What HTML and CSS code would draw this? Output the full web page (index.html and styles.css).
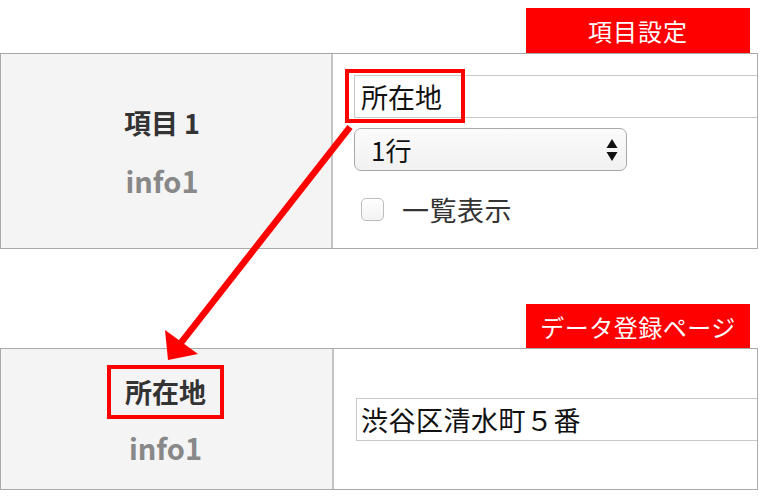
FILE: index.html
```html
<!DOCTYPE html>
<html lang="ja">
<head>
  <meta charset="UTF-8">
  <meta name="viewport" content="width=device-width, initial-scale=1.0">
  <title>項目設定とデータ登録</title>
  <link rel="stylesheet" href="styles.css">
</head>
<body>
  <div class="page">
    <section class="block">
      <div class="tag">項目設定</div>
      <div class="row row-setting">
        <div class="row-head">
          <p class="head-title">項目 1</p>
          <p class="head-info">info1</p>
        </div>
        <div class="row-body">
          <div class="field">
            <input type="text" class="text-input input-name" value="所在地">
            <span class="mark"></span>
          </div>
          <div class="select-wrap">
            <select class="select">
              <option>1行</option>
            </select>
            <svg class="select-arrows" width="12" height="24" viewBox="0 0 12 24">
              <path d="M6 1 L11.5 10 L0.5 10 Z" fill="#111"/>
              <path d="M0.5 14 L11.5 14 L6 23 Z" fill="#111"/>
            </svg>
          </div>
          <label class="check">
            <input type="checkbox" class="check-box">
            <span class="check-text">一覧表示</span>
          </label>
        </div>
      </div>
    </section>

    <section class="block block-data">
      <div class="tag">データ登録ページ</div>
      <div class="row row-data">
        <div class="row-head">
          <p class="head-title boxed">所在地</p>
          <p class="head-info">info1</p>
        </div>
        <div class="row-body">
          <input type="text" class="text-input input-address" value="渋谷区清水町５番">
        </div>
      </div>
    </section>

    <!-- annotation arrow from setting to data page -->
    <svg class="arrow" width="768" height="500" viewBox="0 0 768 500">
      <line x1="350" y1="127" x2="180" y2="344" stroke="#ff0000" stroke-width="6.5"/>
      <polygon points="168,360 165,330 198,354" fill="#ff0000"/>
    </svg>
  </div>
</body>
</html>
```

FILE: styles.css
```css
/* Basic styles */
body {
  margin: 0;
  padding: 0;
  background: #fff;
  font-family: "Noto Sans CJK JP", "Noto Sans", sans-serif;
  color: #111;
}
p {
  margin: 0;
}
.page {
  position: relative;
  width: 758px;
  height: 500px;
}
.block {
  display: flex;
  flex-direction: column;
}
.block-data {
  margin-top: 55px;
}
.tag {
  align-self: flex-end;
  width: 224px;
  height: 45px;
  margin: 8px 8px 0 0;
  background: #ff0000;
  color: #fff;
  font-size: 24px;
  line-height: 45px;
  text-align: center;
  letter-spacing: 1px;
}
.block-data .tag {
  margin-top: 0;
  margin-bottom: -1px;
  letter-spacing: 0.5px;
}
.row {
  display: flex;
  border: 1px solid #a9a9a9;
  box-sizing: border-box;
}
.row-setting {
  height: 196px;
}
.row-data {
  height: 142px;
}
.row-head {
  width: 332px;
  flex: none;
  background: #f4f4f4;
  border-right: 2px solid #c4c4c4;
  display: flex;
  flex-direction: column;
  align-items: center;
  justify-content: center;
  padding-right: 8px;
  box-sizing: border-box;
}
.row-data .row-head {
  width: 333px;
  padding-right: 2px;
  padding-bottom: 12px;
}
.head-title {
  font-size: 27px;
  font-weight: bold;
  line-height: 30px;
  color: #333;
}
.head-info {
  margin-top: 27px;
  font-size: 29px;
  font-weight: bold;
  line-height: 30px;
  color: #888;
}
.boxed {
  border: 4px solid #ff0000;
  padding: 8px 14px;
}
.row-data .head-info {
  margin-top: 13px;
}
.row-body {
  flex: 1;
  overflow: hidden;
  padding: 21px 0 0 21px;
}
.row-data .row-body {
  display: flex;
  align-items: center;
  padding: 0 0 0 22px;
}
.field {
  position: relative;
}
.text-input {
  display: block;
  height: 43px;
  box-sizing: border-box;
  border: 1px solid #c8c8c8;
  background: #fff;
  font-family: "Noto Sans CJK JP", sans-serif;
  font-size: 27px;
  color: #111;
  outline: none;
}
.input-name {
  width: 440px;
  padding: 0 6px;
}
.input-address {
  width: 460px;
  flex: none;
  padding: 0 4px;
  letter-spacing: 0.5px;
}
.mark {
  position: absolute;
  left: -9px;
  top: -6px;
  width: 120px;
  height: 54px;
  box-sizing: border-box;
  border: 4px solid #ff0000;
}
.select-wrap {
  position: relative;
  width: 273px;
  margin-top: 10px;
}
.select {
  display: block;
  width: 100%;
  height: 43px;
  -webkit-appearance: none;
  appearance: none;
  border: 1px solid #a8a8a8;
  border-radius: 7px;
  background: linear-gradient(#fbfbfb, #f1f1f1);
  padding: 0 0 0 16px;
  font-family: "Noto Sans CJK JP", sans-serif;
  font-size: 26px;
  color: #111;
}
.select-arrows {
  position: absolute;
  right: 9px;
  top: 10px;
  pointer-events: none;
}
.check {
  display: flex;
  align-items: center;
  margin: 27px 0 0 7px;
  height: 23px;
}
.check-box {
  -webkit-appearance: none;
  appearance: none;
  margin: 0;
  width: 23px;
  height: 23px;
  border: 1px solid #bdbdbd;
  border-radius: 5px;
  background: linear-gradient(#fff, #f2f2f2);
}
.check-text {
  margin-left: 18px;
  font-size: 27px;
  letter-spacing: 0.5px;
  color: #333;
}
.arrow {
  position: absolute;
  top: 0;
  left: 0;
  pointer-events: none;
}
```
